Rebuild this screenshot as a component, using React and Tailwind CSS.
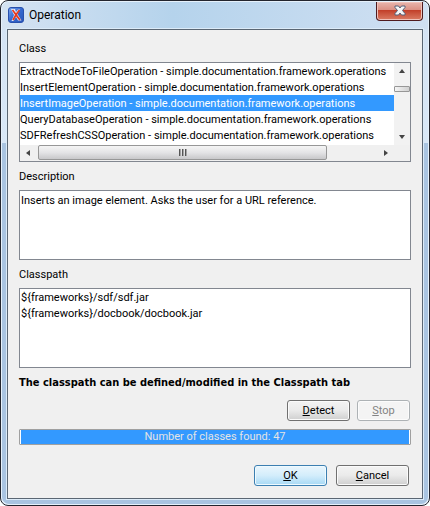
import { useState } from "react";

const PACKAGE = "simple.documentation.framework.operations";
const CLASSES = [
  "ExtractNodeToFileOperation",
  "InsertElementOperation",
  "InsertImageOperation",
  "QueryDatabaseOperation",
  "SDFRefreshCSSOperation",
];

function Arrow({ label, d }) {
  return (
    <button type="button" aria-label={label} className="flex size-4 shrink-0 items-center justify-center">
      <svg viewBox="0 0 8 8" className="size-2" fill="#444" aria-hidden="true">
        <path d={d} />
      </svg>
    </button>
  );
}

function PushButton({ mnemonic, rest, className, disabled }) {
  return (
    <button
      type="button"
      disabled={disabled}
      className={`h-[21px] rounded-[3px] border text-center leading-[18px] ${className}`}
    >
      <u className="underline underline-offset-1">{mnemonic}</u>
      {rest}
    </button>
  );
}

const NORMAL =
  "border-[#707070] bg-linear-to-b from-[#f3f3f3] from-0% via-[#ebebeb] via-48% to-[#cfcfcf] to-100% shadow-[inset_0_0_0_1px_#fbfbfb]";
const DEFAULT =
  "border-[#3c7fb1] bg-linear-to-b from-[#eaf6fd] from-0% via-[#d3edfb] via-50% to-[#a7d9f5] to-100% shadow-[inset_0_0_0_1px_#eefaff]";
const DISABLED = "border-[#adb2b5] bg-[#f4f4f4] text-[#838383] shadow-[inset_0_0_0_1px_#fcfcfc]";

function TitleBar() {
  return (
    <header className="flex h-[27px] items-start justify-between rounded-t-[6px] bg-linear-to-r from-[#d5e3f2] from-0% via-[#b5d3ec] via-40% to-[#d0e0f2] to-100% pl-1.5">
      <div className="flex items-center gap-[5px] pt-[5px]">
        <svg viewBox="0 0 16 16" className="size-4" aria-hidden="true">
          <defs>
            <linearGradient id="appIcon" x1="0" y1="0" x2="1" y2="1">
              <stop offset="0" stopColor="#7fa9ee" />
              <stop offset="0.5" stopColor="#3468cf" />
              <stop offset="1" stopColor="#2a56b8" />
            </linearGradient>
          </defs>
          <rect x="0.5" y="0.5" width="15" height="15" rx="2.5" fill="url(#appIcon)" stroke="#2850ad" />
          <path d="M3 2H7L8 5 10 2.500H12L9.500 7 13.500 13.500H10L8 10 5.500 14H3.500L6 8Z" fill="#dfe8fa" />
          <path d="M4.500 3C6.500 5.500 9 9.500 12 13M11.500 3C9 6 7 9 5 13" fill="none" stroke="#e8391d" strokeWidth="1.8" />
        </svg>
        <h1 className="font-['Roboto','Noto_Sans',sans-serif] text-[12px] leading-4">Operation</h1>
      </div>
      <button
        type="button"
        aria-label="Close"
        className="mr-[5px] flex h-[19px] w-[47px] items-center justify-center rounded-b-[4px] border border-t-0 border-[#4f1b1f] bg-linear-to-b from-[#e8b5ad] from-0% via-[#d98b7e] via-50% to-[#d8755d] to-100% shadow-[inset_0_0_0_1px_#efc2ba]"
      >
        <span className="mx-px mb-px flex h-[17px] w-full items-center justify-center rounded-b-[3px] bg-linear-to-b from-transparent from-45% via-[#c2402a] via-50% to-[#d8755d]">
          <svg viewBox="0 0 12 11" className="h-[11px] w-3" aria-hidden="true">
            <path
              d="M1 1H4.5L6 3 7.5 1H11V2.5L8.5 5.5 11 8.5V10H7.5L6 8 4.5 10H1V8.5L3.5 5.5 1 2.5Z"
              fill="#f5f5f5"
              stroke="#54607a"
            />
          </svg>
        </span>
      </button>
    </header>
  );
}

function ClassList({ selected, onSelect }) {
  return (
    <div className="border border-[#828790] bg-white">
      <div className="flex h-[82px]">
        <ul role="listbox" aria-labelledby="class-label" className="min-w-0 flex-1 overflow-hidden">
          {CLASSES.map((name) => (
            <li
              key={name}
              role="option"
              aria-selected={name === selected}
              onClick={() => onSelect(name)}
              className={`h-4 cursor-default leading-[17px] whitespace-nowrap ${
                name === selected ? "bg-[#3399ff] text-white" : ""
              }`}
            >
              {name} - {PACKAGE}
            </li>
          ))}
        </ul>
        <div className="flex w-4 flex-col bg-[#f2f2f2]">
          <Arrow label="Scroll up" d="M4 2 7 6H1Z" />
          <div className="flex-1 pt-[7px]">
            <div className="h-1.5 rounded-[1px] border border-[#979797] bg-linear-to-r from-[#f5f5f5] to-[#d0d0d0]" />
          </div>
          <Arrow label="Scroll down" d="M1 2H7L4 6Z" />
        </div>
      </div>
      <div className="flex h-4 bg-[#f0f0f0]">
        <Arrow label="Scroll left" d="M6 1V7L2 4Z" />
        <div className="flex-1 pl-0.5">
          <div className="flex h-[15px] w-[85%] items-center justify-center gap-px rounded-[2px] border border-[#979797] bg-linear-to-b from-[#f5f5f5] from-0% via-[#e4e4e6] via-50% to-[#c8c8ca] to-100%">
            <i className="h-[7px] w-0.5 border-l border-[#555] bg-[#a4a4a4]" />
            <i className="h-[7px] w-0.5 border-l border-[#555] bg-[#a4a4a4]" />
            <i className="h-[7px] w-0.5 border-l border-[#555] bg-[#a4a4a4]" />
          </div>
        </div>
        <Arrow label="Scroll right" d="M2 1V7L6 4Z" />
        <div className="w-4" />
      </div>
    </div>
  );
}

export default function App() {
  const [selected, setSelected] = useState("InsertImageOperation");
  return (
    <div className="bg-white font-['Roboto','Noto_Sans',sans-serif] text-[11px] text-black">
      <div className="rounded-[8px] border border-[#23252e] bg-[#e6f1fb] p-px">
        <div className="rounded-[7px] bg-linear-to-b from-[#d3e2f3] from-0% via-[#d9e8f7] via-28% to-[#a9c4e1] to-28%">
          <TitleBar />
          <div className="px-[5px] pb-[5px]">
            <main className="border border-[#5a6673] bg-[#f0f0f0] px-[11px] pt-2.5 pb-3 shadow-[0_0_0_1px_#dcebf8]">
              <h2 id="class-label" className="mb-1.5 h-4 text-[11px] leading-[17px]">Class</h2>
              <ClassList selected={selected} onSelect={setSelected} />

              <label htmlFor="description" className="mt-1.5 mb-1.5 block h-4 leading-[17px]">Description</label>
              <textarea
                id="description"
                readOnly
                className="block h-[70px] w-full resize-none overflow-hidden border border-[#828790] bg-white px-px py-0.5 leading-4 outline-none"
                value="Inserts an image element. Asks the user for a URL reference."
              />

              <label htmlFor="classpath" className="mt-1.5 mb-1.5 block h-4 leading-[17px]">Classpath</label>
              <textarea
                id="classpath"
                readOnly
                className="block h-20 w-full resize-none overflow-hidden border border-[#828790] bg-white p-px leading-4 outline-none"
                value={"${frameworks}/sdf/sdf.jar\n${frameworks}/docbook/docbook.jar"}
              />
              <p className="mt-1.5 h-4 font-['DejaVu_Sans_Condensed','DejaVu_Sans',sans-serif] leading-[17px] font-bold">The classpath can be defined/modified in the Classpath tab</p>

              <div className="mt-2.5 flex justify-end gap-[7px] pr-px">
                <PushButton mnemonic="D" rest="etect" className={`w-[63px] ${NORMAL}`} />
                <PushButton mnemonic="S" rest="top" disabled className={`w-[53px] ${DISABLED}`} />
              </div>

              <div
                role="progressbar"
                aria-label="Class detection"
                aria-valuenow={100}
                aria-valuemin={0}
                aria-valuemax={100}
                className="mt-2 h-4 rounded-[1px] border border-[#a0a0a0] bg-white px-px"
              >
                <div className="h-full bg-[#3399ff] text-center leading-[13px] text-[#e4e4e4]">
                  Number of classes found: 47
                </div>
              </div>

              <div className="mt-5 flex justify-end gap-[9px] pr-0.5">
                <PushButton mnemonic="O" rest="K" className={`w-[73px] ${DEFAULT}`} />
                <PushButton mnemonic="C" rest="ancel" className={`w-[73px] ${NORMAL}`} />
              </div>
            </main>
          </div>
        </div>
      </div>
    </div>
  );
}
